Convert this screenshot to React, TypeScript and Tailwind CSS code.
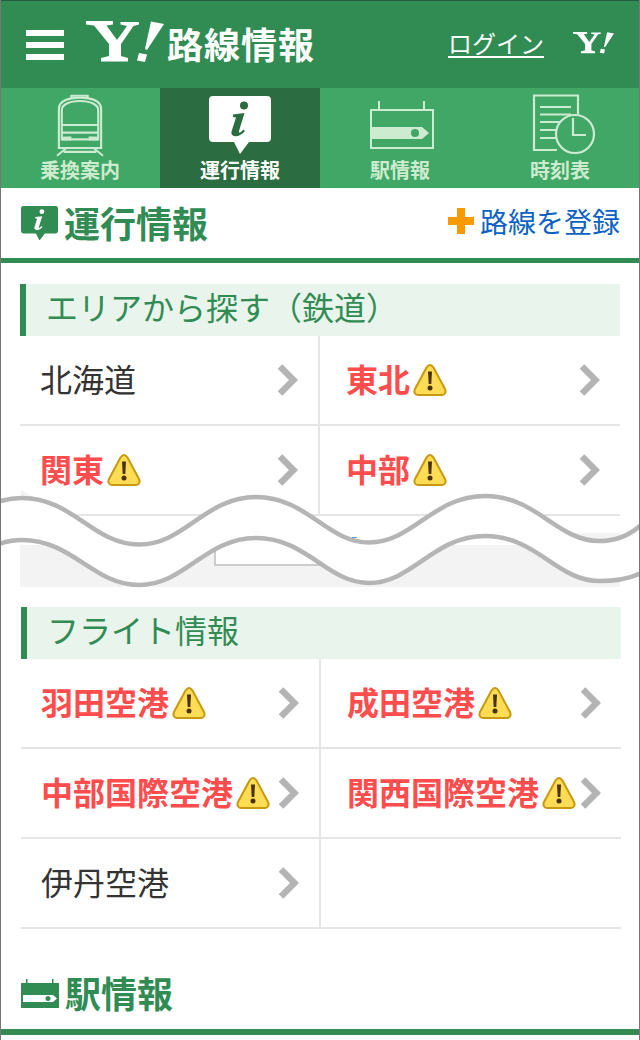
import React from 'react';

const FONT = "font-['Noto_Sans_CJK_JP','Noto_Sans',sans-serif]";

const YahooLogo = ({ className }: { className?: string }) => (
  <svg viewBox="0 0 78 42" className={className} fill="#fff">
    <path d="M0 0H27V3.5L20.5 4.5L31 19L41 5L34.5 3.5V1H53V3.5L47.5 5L35 23V35L42 37V40.5H15V37L23 35V23L8 4.5L0 3.5Z" />
    <path d="M65 0.5L78 3L61 29L59 28Z" />
    <path d="M53 32L61 33.5L59 41L51 39.5Z" />
  </svg>
);

const TrainIcon = () => (
  <svg width="48" height="64" viewBox="0 0 50 66" fill="none" stroke="#cdeccf" strokeWidth="2.2">
    <path d="M16 5V2.5H33V5" />
    <path d="M3 57V16C3 8 13 4.5 25 4.5C37 4.5 47 8 47 16V57Z" />
    <path d="M6 48V17C6 12 14 8 25 8C36 8 44 12 44 17V48Z" />
    <path d="M6 33H44M6 41H44" />
    <rect x="7" y="45" width="9" height="4" fill="#cdeccf" stroke="none" />
    <rect x="34" y="45" width="9" height="4" fill="#cdeccf" stroke="none" />
    <path d="M11 57L1 65M39 57L49 65M8 61H42" />
  </svg>
);

const InfoBubble = ({ size = 62, fg = '#fff', bg = '#2b6c40' }: { size?: number; fg?: string; bg?: string }) => (
  <svg width={size} height={(size * 58) / 62} viewBox="0 0 62 58">
    <path d="M4 0H58Q62 0 62 4V42Q62 46 58 46H40L31 58L25 46H4Q0 46 0 42V4Q0 0 4 0Z" fill={fg} />
    <circle cx="35" cy="9.5" r="4" fill={bg} />
    <path
      d="M24 18.5L35.5 17L30 35C29.6 37 31 37 32.5 35.5L34.5 33.5L36 35C33 39 28 41 25 40C22 39 22 36.5 23 34L27 21.5L24 21Z"
      fill={bg}
    />
  </svg>
);

const StationIcon = () => (
  <svg width="64" height="48" viewBox="0 0 64 48" fill="none" stroke="#cdeccf" strokeWidth="2">
    <path d="M9 9V0M54 9V0" />
    <rect x="1" y="9" width="62" height="38" />
    <path d="M1 26H52L59 32L52 38H1Z" fill="#cdeccf" stroke="none" />
    <circle cx="45" cy="32" r="4" fill="#40a766" stroke="none" />
  </svg>
);

const TimetableIcon = () => (
  <svg width="64" height="62" viewBox="0 0 64 62" fill="none" stroke="#cdeccf" strokeWidth="2.2">
    <path d="M46 20V1.5H2V56H25" />
    <path d="M8 13H39M8 20.5H39M8 28H30M8 36H25M8 44H24" strokeWidth="2" />
    <circle cx="43" cy="40" r="19" fill="#40a766" />
    <path d="M41 24V41H54" />
  </svg>
);

const StationTitleIcon = () => (
  <svg width="38" height="29" viewBox="0 0 38 29" className="shrink-0">
    <path d="M5 5V0H6.5V5ZM31 5V0H32.5V5Z" fill="#318c54" />
    <rect x="0" y="4" width="38" height="25" fill="#318c54" />
    <path d="M2 16H32L36 19.5L32 23H2Z" fill="#fff" />
    <circle cx="27" cy="19.5" r="2.5" fill="#318c54" />
  </svg>
);

const Warning = () => (
  <svg width="34" height="34" viewBox="0 0 34 34" className="shrink-0">
    <path
      d="M17 2C15.5 2 14.5 3 13.5 4.5L2 26C0.6 29 2 32 5 32H29C32 32 33.4 29 32 26L20.5 4.5C19.5 3 18.5 2 17 2Z"
      fill="#ffdc55"
      stroke="#c8990e"
      strokeWidth="2"
    />
    <path d="M15 8.5H19L18.3 21H15.7Z" fill="#4a3208" />
    <circle cx="17" cy="25" r="2.5" fill="#4a3208" />
  </svg>
);

const Chevron = () => (
  <svg width="22" height="32" viewBox="0 0 22 32" className="shrink-0">
    <path d="M4 2.5L17.5 16L4 29.5" fill="none" stroke="#b4b4b4" strokeWidth="6.5" />
  </svg>
);

type Cell = { name: string; alert?: boolean };

const areas: Cell[] = [
  { name: '北海道' },
  { name: '東北', alert: true },
  { name: '関東', alert: true },
  { name: '中部', alert: true },
];

const flights: Cell[] = [
  { name: '羽田空港', alert: true },
  { name: '成田空港', alert: true },
  { name: '中部国際空港', alert: true },
  { name: '関西国際空港', alert: true },
  { name: '伊丹空港' },
];

const navItems = [
  { label: '乗換案内', icon: <TrainIcon /> },
  { label: '運行情報', icon: <InfoBubble />, active: true },
  { label: '駅情報', icon: <span className="ml-[3px] block"><StationIcon /></span> },
  { label: '時刻表', icon: <span className="ml-[8px] block"><TimetableIcon /></span> },
];

const CellLink = ({ cell, index }: { cell: Cell; index: number }) => (
  <div
    className={`flex h-[90px] items-center justify-between border-b-2 border-[#e5e5e5] pr-[20px] ${
      index % 2 === 0 ? 'border-r-2 pl-[20px]' : 'pl-[26px]'
    }`}
  >
    <span className="flex items-center gap-[3px]">
      {cell.alert ? (
        <span className="mb-[5px] text-[32px] leading-none font-bold text-[#ff4c4c]">{cell.name}</span>
      ) : (
        <span className="mb-[5px] text-[32px] leading-none text-[#333]">{cell.name}</span>
      )}
      {cell.alert && <Warning />}
    </span>
    <Chevron />
  </div>
);

const SectionHead = ({ children }: { children: React.ReactNode }) => (
  <h3 className="flex h-[52px] items-center border-l-[6px] border-[#318c54] bg-[#e9f4ec] pb-[9px] pl-[20px] text-[32px] leading-none font-normal text-[#318c54]">
    {children}
  </h3>
);

// 切り取り線の波
const Wave = () => (
  <svg width="640" height="110" viewBox="0 0 640 110" className="absolute top-[488px] left-0">
    <path d="M20 2L20 10L34 10Z" fill="#f3f3f3" />
    <path
      d="M-94 56C-50 56 -30 10 21 10C72 10 92 56.5 138 56.5C184 56.5 204 9 255 9C306 9 326 54.5 368 54.5C412 54.5 432 8 484 8C536 8 556 53 598 53C618 53 630 46 640 37V85C630 90 618 93 598 93C556 93 536 48 484 48C432 48 412 95 368 95C326 95 306 50 255 50C204 50 184 97 138 97C92 97 72 52 21 52C10 52 2 54 -6 58Z"
      fill="#fff"
    />
    <path
      d="M-94 56C-50 56 -30 10 21 10C72 10 92 56.5 138 56.5C184 56.5 204 9 255 9C306 9 326 54.5 368 54.5C412 54.5 432 8 484 8C536 8 556 53 598 53C618 53 630 46 640 37"
      fill="none"
      stroke="#b5b5b5"
      strokeWidth="4.5"
    />
    <path
      d="M640 85C630 90 618 93 598 93C556 93 536 48 484 48C432 48 412 95 368 95C326 95 306 50 255 50C204 50 184 97 138 97C92 97 72 52 21 52C10 52 2 54 -6 58"
      fill="none"
      stroke="#b5b5b5"
      strokeWidth="4.5"
    />
    <rect x="351" y="49" width="5" height="1" fill="#5b9bd8" />
  </svg>
);

export default function App() {
  return (
    <div className={`relative h-[1040px] w-[640px] overflow-hidden border-x border-[#777] bg-white ${FONT}`}>
      <header className="flex h-[88px] items-center justify-between border-t border-[#225c3a] bg-[#318c54] pr-[23px] pl-[25px]">
        <div className="flex items-center">
          <span className="flex w-[38px] flex-col gap-[6px]">
            <i className="h-[6px] bg-white" />
            <i className="h-[6px] bg-white" />
            <i className="h-[6px] bg-white" />
          </span>
          <YahooLogo className="mb-[6px] ml-[22px] h-[42px] w-[78px]" />
          <span className="mb-[4px] ml-[3px] text-[36px] leading-none font-bold tracking-[1px] text-white">路線情報</span>
        </div>
        <div className="flex items-center gap-[27px]">
          <a className="mb-[3px] ml-[1px] border-b-2 border-white text-[24px] leading-[27px] text-white">ログイン</a>
          <YahooLogo className="mb-[4px] h-[22px] w-[45px]" />
        </div>
      </header>

      <nav className="-mx-px grid h-[100px] grid-cols-4 bg-[#40a766]">
        {navItems.map((item) => (
          <div
            key={item.label}
            className={`flex flex-col items-center justify-end pb-[6px] ${item.active ? 'bg-[#2b6c40] text-white' : 'text-[#cdeccf]'}`}
          >
            <span className="flex flex-1 items-center pt-[4px]">{item.icon}</span>
            <span className="text-[20px] leading-[24px] font-bold">{item.label}</span>
          </div>
        ))}
      </nav>

      <div className="flex h-[70px] items-center justify-between pr-[19px] pl-[20px]">
        <h2 className="flex items-center gap-[6px] text-[36px] leading-none font-bold text-[#318c54]">
          <InfoBubble size={37} fg="#318c54" bg="#fff" />
          <span className="mb-[3px]">運行情報</span>
        </h2>
        <a className="mb-[4px] flex items-center gap-[6px] text-[28px] leading-none text-[#0b62c4]">
          <span className="relative block h-[26px] w-[26px]">
            <i className="absolute top-[9px] left-0 h-[8px] w-[26px] bg-[#f79a00]" />
            <i className="absolute top-0 left-[9px] h-[26px] w-[8px] bg-[#f79a00]" />
          </span>
          <span className="mb-[1px]">路線を登録</span>
        </a>
      </div>
      <div className="h-[5px] bg-[#318c54]" />

      <section className="mt-[21px] mr-[19px] ml-[19px]">
        <SectionHead>エリアから探す（鉄道）</SectionHead>
        <div className="grid grid-cols-2">
          {areas.map((cell, i) => (
            <CellLink key={cell.name} cell={cell} index={i} />
          ))}
        </div>
        <div className="h-[17px] bg-white" />
        <div className="h-[12px] bg-[#f3f3f3]">
          <div className="h-full w-[550px] bg-white" />
        </div>
        <div className="h-[42px] bg-[#f3f3f3] pl-[194px]">
          <div className="h-[21px] w-[130px] border-2 border-t-0 border-[#ccc] bg-white" />
        </div>
      </section>

      <section className="mt-[20px] mr-[18px] ml-[20px]">
        <SectionHead>フライト情報</SectionHead>
        <div className="grid grid-cols-2">
          {flights.map((cell, i) => (
            <CellLink key={cell.name} cell={cell} index={i} />
          ))}
          <div className="h-[90px] border-b-2 border-[#e5e5e5]" />
        </div>
      </section>

      <div className="mt-[40px] flex h-[60px] items-center gap-[6px] px-[20px] pb-[11px] text-[36px] leading-none font-bold text-[#318c54]">
        <StationTitleIcon />
        <span className="mb-[3px]">駅情報</span>
      </div>
      <div className="h-[6px] bg-[#318c54]" />

      <Wave />
    </div>
  );
}
